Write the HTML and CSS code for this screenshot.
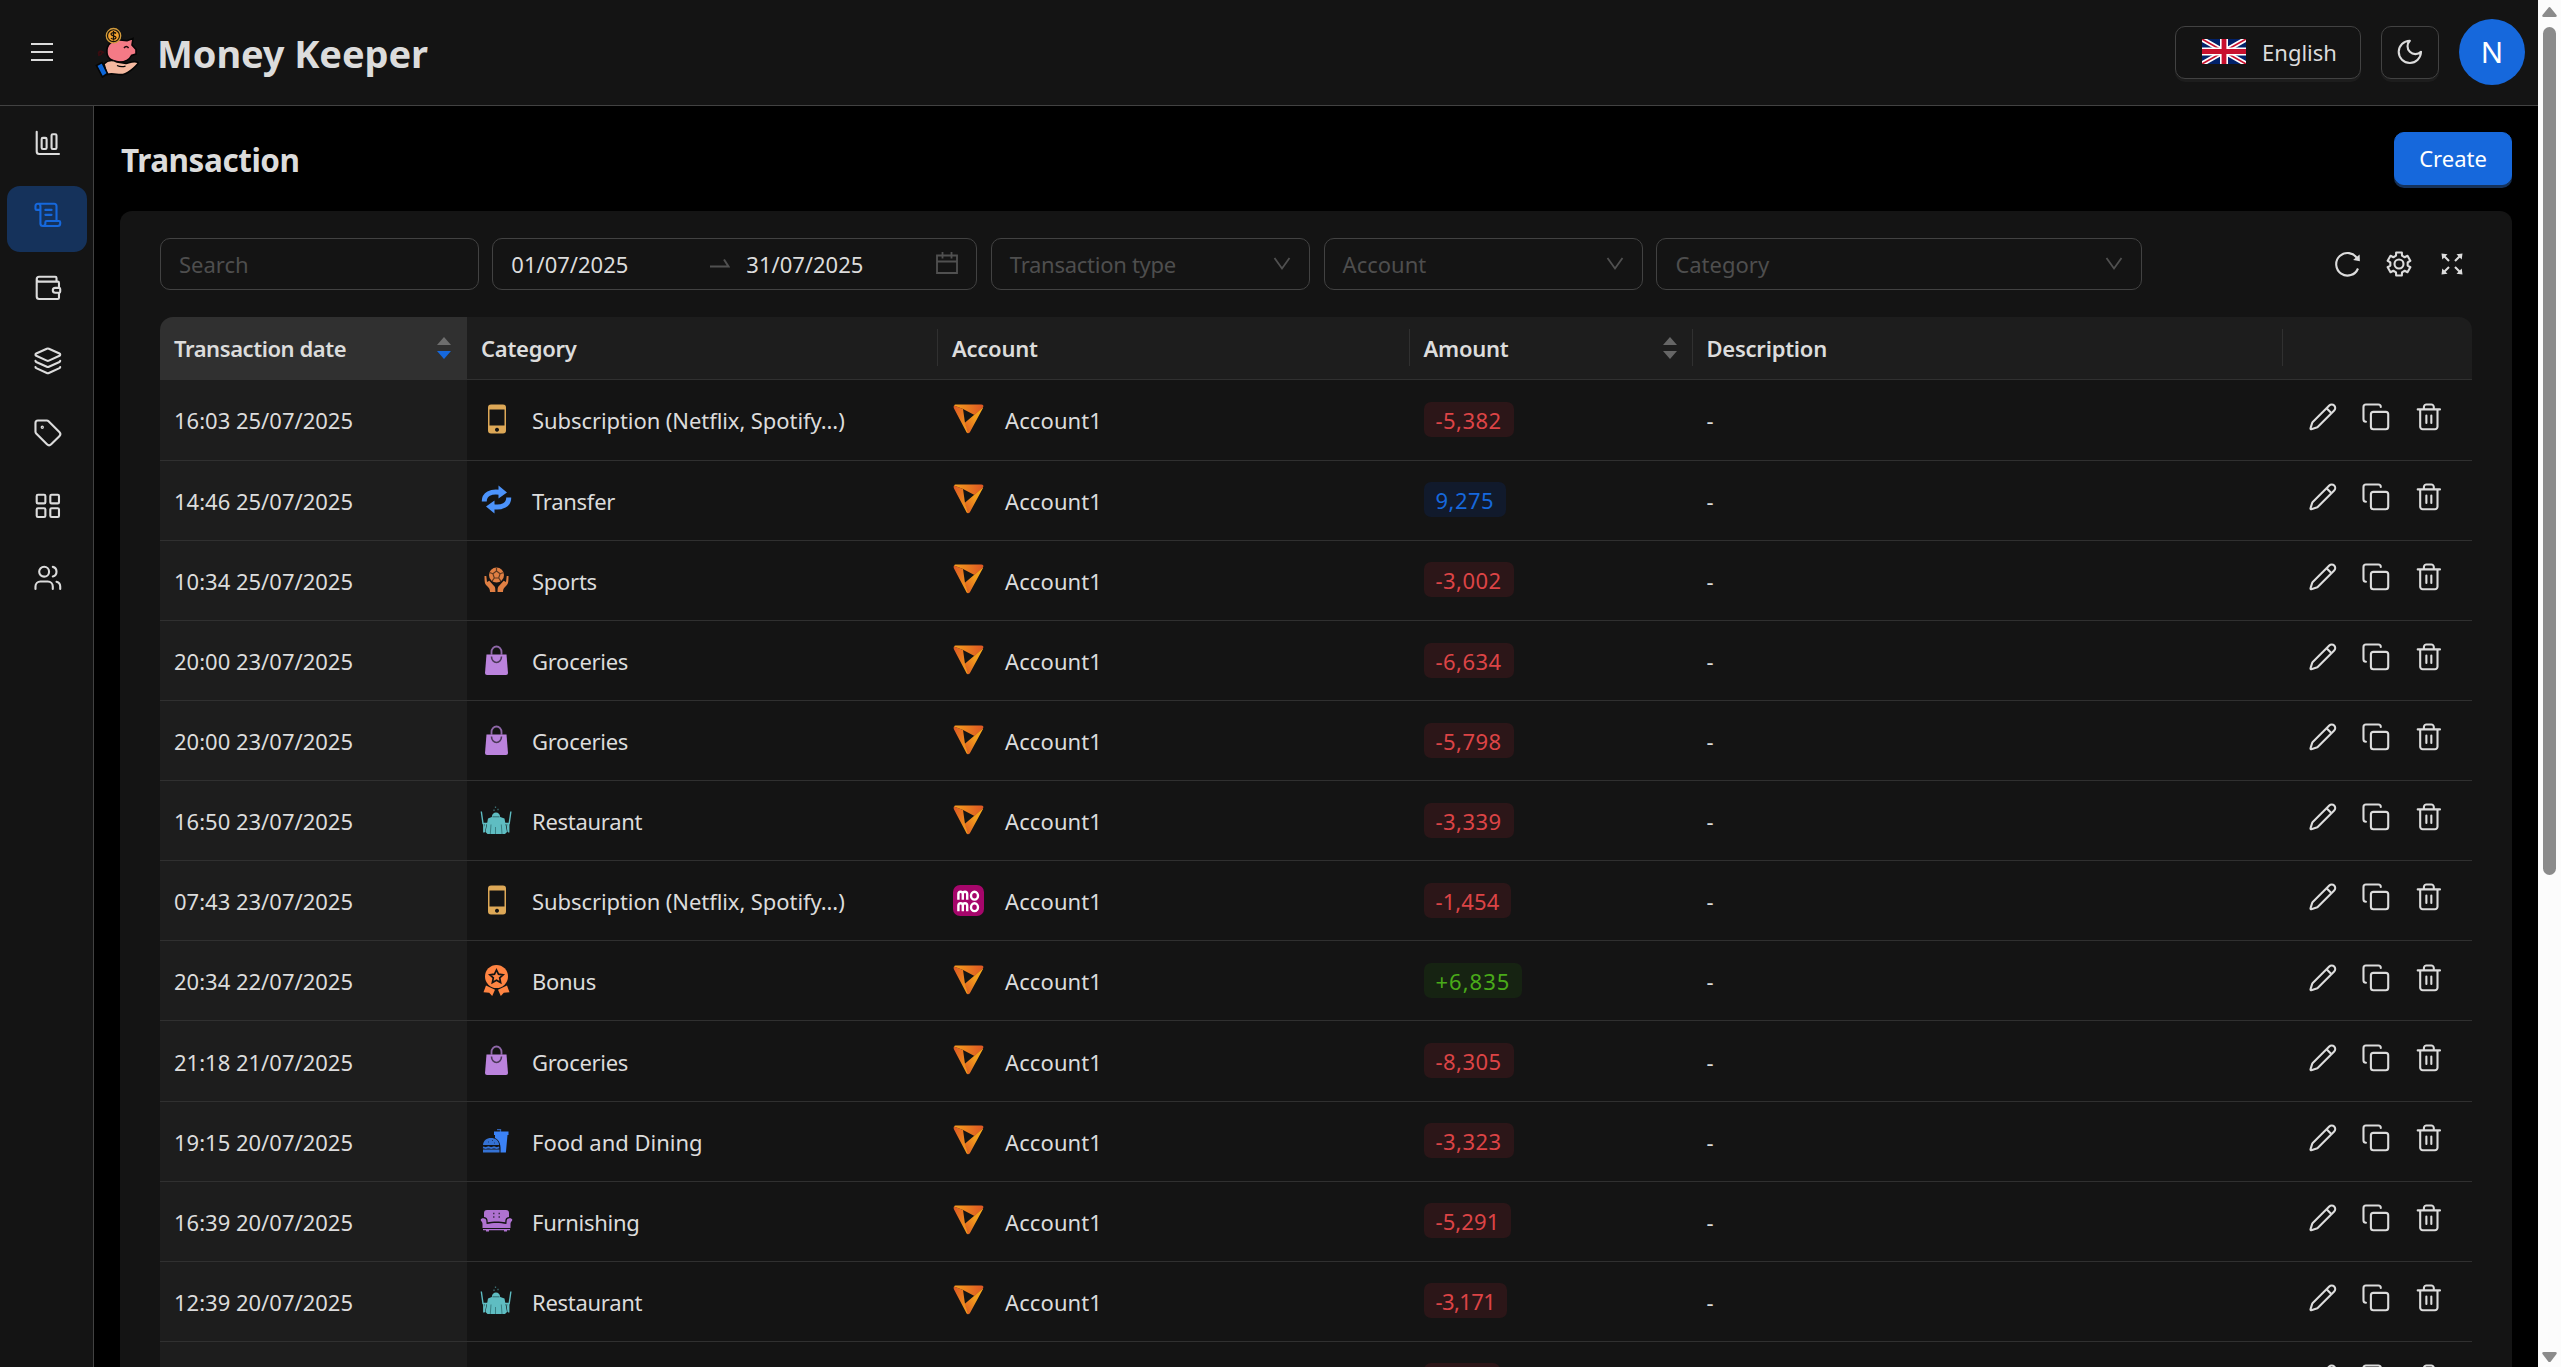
FILE: index.html
```html
<!DOCTYPE html>
<html lang="en">
<head>
<meta charset="utf-8">
<title>Money Keeper</title>
<link rel="stylesheet" href="styles.css">
</head>
<body>
<svg class="defs" aria-hidden="true">
  <defs>
    <linearGradient id="g-top" x1="0" x2="1" y1="0" y2="0"><stop offset="0" stop-color="#f7a01c"/><stop offset="1" stop-color="#dd5524"/></linearGradient>
    <linearGradient id="g-left" x1="0" x2="1" y1="0" y2="1"><stop offset="0" stop-color="#dd5524"/><stop offset="1" stop-color="#f5a31b"/></linearGradient>
    <linearGradient id="g-right" x1="1" x2="0" y1="0" y2="1"><stop offset="0" stop-color="#f9ab1b"/><stop offset="0.45" stop-color="#f19a1c"/><stop offset="1" stop-color="#dd5524"/></linearGradient>
  </defs>
  <symbol id="pencil" viewBox="0 0 24 24"><path d="M21.174 6.812a1 1 0 0 0-3.986-3.987L3.842 16.174a2 2 0 0 0-.5.83l-1.321 4.352a.5.5 0 0 0 .623.622l4.353-1.32a2 2 0 0 0 .83-.497zM15 5l4 4"/></symbol>
  <symbol id="copy" viewBox="0 0 24 24"><rect x="8" y="8" width="14" height="14" rx="2"/><path d="M4 16c-1.1 0-2-.9-2-2V4c0-1.1.9-2 2-2h10c1.1 0 2 .9 2 2"/></symbol>
  <symbol id="trash" viewBox="0 0 24 24"><path d="M3 6h18M19 6v14c0 1-1 2-2 2H7c-1 0-2-1-2-2V6M8 6V4c0-1 1-2 2-2h4c1 0 2 1 2 2v2M10 11v6M14 11v6"/></symbol>
  <symbol id="sorter" viewBox="0 0 14 22"><path d="M7 0l7 8H0z"/><path fill="currentColor" d="M0 14h14l-7 8z"/></symbol>
  <symbol id="chevron" viewBox="0 0 20 20"><path d="M2.500 4L10 14.500 17.500 4"/></symbol>

  <symbol id="phone" viewBox="0 0 33 33"><path fill="#dda857" fill-rule="evenodd" d="M11 1.500h12a3 3 0 0 1 3 3v23a3 3 0 0 1-3 3H11a3 3 0 0 1-3-3v-23a3 3 0 0 1 3-3zM9.500 6.500v16h15v-16zM17 24.800a2 2 0 1 0 .01 0z"/></symbol>
  <symbol id="transfer" viewBox="0 0 33 33"><path d="M4.300 18.500C4 11.500 11 7.600 20 9.300M28.700 14.500C29 21.500 22 25.400 13 23.700" fill="none" stroke="#4c93fb" stroke-width="5"/><path fill="#4c93fb" d="M18.500 2.500L27 9.500 18.500 15.500zM14.500 30.500L6 23.500l8.500-6z"/></symbol>
  <symbol id="sports" viewBox="0 0 33 33"><circle cx="16.500" cy="12" r="7.500" fill="#e07f43"/><path d="M16.500 8l3.600 2.700-1.400 4.300h-4.400l-1.400-4.300zM16.500 4.500V8M20.100 10.700l3.400-1.200M18.700 15l2.200 3.200M14.300 15l-2.200 3.200M12.900 10.700L9.500 9.500" fill="none" stroke="#5f3920" stroke-width="1.200"/><path fill="#e07f43" d="M4.500 13h1.800l.7 6 2.300-1.200 5.200 5.600c.7.900.9 1.800.9 5.600H10c0-3-1-4-3.200-6.200C4.800 21 4.500 19 4.500 13zM28.500 13h-1.800l-.7 6-2.300-1.200-5.200 5.600c-.7.900-.9 1.800-.9 5.600H23c0-3 1-4 3.200-6.200C28.200 21 28.500 19 28.500 13z"/></symbol>
  <symbol id="bag" viewBox="0 0 33 33"><path fill="#bb83dd" d="M6.500 10.500h20L28 29a2 2 0 0 1-2 2H7a2 2 0 0 1-2-2z"/><path d="M11.500 11V8a5 5.500 0 0 1 10 0v3" fill="none" stroke="#8f68a8" stroke-width="1.800"/><path d="M11.500 12.500a5 6 0 0 0 10 0" fill="none" stroke="#4d3a5b" stroke-width="1.600"/></symbol>
  <symbol id="restaurant" viewBox="0 0 33 33"><path fill="#5fbdc2" d="M11.800 13c.2-2.800 1.900-4.500 4.200-4.500s4 1.700 4.200 4.500l4.300 1.500L27 28l-2 2H7.500L5.500 28 8 14.500z"/><path d="M1.300 7.500l1.700 12h5M3.800 20v8.500M5.800 20l-1.500 8M30.900 7.500l-1.700 12h-5M28.700 20v8.500M27 20l1.200 8" fill="none" stroke="#5fbdc2" stroke-width="1.400"/><path d="M11 20.500l-.7 9.500M21.300 20.500l.7 9.500M15.500 23v7" stroke="#3a7f83" stroke-width="1"/><path d="M12.500 12.800h7" stroke="#2f6d70" stroke-width="1"/><path d="M15.500 2.500V4M18 4.800v1.500M14 5.500V7" stroke="#3b6f73" stroke-width="1.300"/></symbol>
  <symbol id="bonus" viewBox="0 0 33 33"><circle cx="16.500" cy="12.500" r="11.500" fill="#ff8442"/><path d="M16.500 6l2 4.200 4.600.6-3.400 3.100.9 4.600-4.100-2.300-4.100 2.300.9-4.600-3.400-3.100 4.600-.6z" fill="none" stroke="#141414" stroke-width="1.700"/><path fill="#ff8442" d="M6 21.500l9 4.300L12.200 32l-3-3.300-5.700-.4zM27 21.500l-9 4.300 2.800 6.200 3-3.300 5.700-.4z"/></symbol>
  <symbol id="food" viewBox="0 0 33 33"><path d="M20.500 8V5.600H17" fill="none" stroke="#2f5fae" stroke-width="1.300"/><path fill="#3b82f6" d="M14 7.500h14.500v3.500H14zM15 11h12.500l-1.600 17.500h-5.400c.5-7-.5-12-5.500-14.500z"/><path fill="#3572d4" d="M3 21c.5-4.800 3.600-7 8-7s7.800 2.200 8.200 7zM3 25.500h16.500v3H3z"/><path d="M3 23.300l2.700.8 2.800-.8 2.700.8 2.800-.8 2.700.8 2.500-.8" fill="none" stroke="#3572d4" stroke-width="1.800"/><path d="M8 18h1M12 16.500h1M14 19h1" stroke="#1d3c70" stroke-width="1.200"/></symbol>
  <symbol id="sofa" viewBox="0 0 33 33"><path fill="#af72d0" d="M7 6h19c2 0 3 1.200 3 3v4c-3 .3-3.700 2-3.700 5.200-5-1-12.600-1-17.600 0C7.700 15 7 13.300 4 13V9c0-1.800 1-3 3-3z"/><path fill="#af72d0" d="M.7 15.800c0-2 5.300-2.600 5.600.8l.3 3.400c6-1.500 13.800-1.500 19.800 0l.3-3.400c.3-3.400 5.600-2.800 5.600-.8 0 1.500-1.800 2-1.800 4V24H2.500v-4.200c0-2-1.800-2.500-1.800-4zM3 24.900h27v1.400H3zM6 26h3v1.500H6zM24 26h3v1.500h-3z"/><path d="M13 9.500h1.500M18.500 9.500H20M13 13h1.500M18.500 13H20" stroke="#3f2c4b" stroke-width="1.500"/></symbol>
  <symbol id="play" viewBox="0 0 33 33"><path fill="url(#g-right)" d="M31 5L18 29c-.6 1.300-2.200 1.600-3 .5L12.500 20l9.500-8 9-8z"/><path fill="url(#g-left)" d="M2 2.500L11 6l2 14 2.800 10.300c-.6-.1-1-.5-1.300-1.100L2 5.500C1.500 4.300 1.500 3.300 2 2.500z"/><path fill="url(#g-top)" d="M3.500 1.500h25.800c1.800 0 2.500 1.200 1.900 2.500L22.500 12 11 6 2 2.500c.4-.6.900-1 1.500-1z"/></symbol>
  <symbol id="momo" viewBox="0 0 33 33"><rect x="1" y="1" width="31" height="31" rx="7" fill="#a6066b"/><g fill="none" stroke="#fff" stroke-width="2.400"><path d="M6.400 15.800V10q0-2.300 2.200-2.300T10.800 10v5.800M10.800 10q0-2.300 2.200-2.300T15.200 10v5.800"/><ellipse cx="22.500" cy="11.700" rx="3.500" ry="3.900"/><path d="M6.400 27.300v-5.800q0-2.300 2.200-2.300t2.200 2.300v5.800M10.800 21.500q0-2.300 2.200-2.300t2.200 2.300v5.800"/><ellipse cx="22.500" cy="23.200" rx="3.500" ry="3.900"/></g></symbol>
</svg>

<div class="viewport">
<div class="app">
  <header class="header">
    <svg class="burger" viewBox="0 0 22 18"><path d="M0 1h22M0 9h22M0 17h22"/></svg>
    <svg class="logo" viewBox="0 0 52 52">
      <path d="M12 27c-2-3-6-2-5.500.5S10 29 10 26.500 6 25 7 30" fill="none" stroke="#3a0c10" stroke-width="1.500"/>
      <path d="M15 27c-1-9 6-13.500 13-13l7 .8 6-2.300-1 6.500 4 4.500v4.500l-4.500 1.500c-2 4-6 6.500-12 6.500S15.500 33 15 27z" fill="#f47a86" stroke="#050505" stroke-width="1.600"/>
      <path d="M32 22q2.300-3 4.600 0" fill="none" stroke="#1a0a0c" stroke-width="1.500"/>
      <path d="M12 38c4-4.500 8-4.500 13-2l9 1.500c3-.5 8-3.500 12-1 1.500 1-9 10.500-15 12-5 1-10-2-16 0z" fill="#f5b9a0" stroke="#050505" stroke-width="1.600"/>
      <path d="M25 39.500c3 1.500 5.500 1.600 8.500.6" fill="none" stroke="#050505" stroke-width="1.300"/>
      <path d="M4.500 39.500l5.500-3 5.500 11-5 3.500z" fill="#0d66d8" stroke="#050505" stroke-width="1.600"/>
      <circle cx="21.500" cy="9.700" r="7.200" fill="#17120a" stroke="#d09a3c" stroke-width="1.300"/><circle cx="21.500" cy="9.700" r="5.400" fill="#f2a12e"/>
      <path d="M24 7.500c-1-1.400-5-1.400-5 .6 0 2.400 5 1.200 5 3.500 0 2-4 2-5 .4M21.500 5v9.500" fill="none" stroke="#17120a" stroke-width="1.300"/>
    </svg>
    <h1 class="brand">Money Keeper</h1>
    <div class="header-actions">
      <button class="btn lang">
        <svg class="flag" viewBox="0 0 44 25"><rect width="44" height="25" fill="#012169"/><path d="M0 0l44 25M44 0L0 25" stroke="#fff" stroke-width="5"/><path d="M0 0l22 12.500L44 25M44 0L22 12.500 0 25" stroke="#c8102e" stroke-width="1.600"/><path d="M22 0v25M0 12.500h44" stroke="#fff" stroke-width="8"/><path d="M22 0v25M0 12.500h44" stroke="#c8102e" stroke-width="4.800"/></svg>
        <span>English</span>
      </button>
      <button class="btn theme"><svg class="icon" viewBox="0 0 24 24"><path d="M12 3a6 6 0 0 0 9 9 9 9 0 1 1-9-9Z"/></svg></button>
      <div class="avatar">N</div>
    </div>
  </header>

  <div class="body">
    <nav class="sidebar">
      <a class="item"><svg class="icon" viewBox="0 0 24 24"><path d="M3 3v16a2 2 0 0 0 2 2h16"/><rect x="15" y="5" width="4" height="12" rx="1"/><rect x="7" y="8" width="4" height="9" rx="1"/></svg></a>
      <a class="item active"><svg class="icon" viewBox="0 0 24 24"><path d="M15 12h-5M15 8h-5M19 17V5a2 2 0 0 0-2-2H4M8 21h12a2 2 0 0 0 2-2v-1a1 1 0 0 0-1-1H11a1 1 0 0 0-1 1v1a2 2 0 1 1-4 0V5a2 2 0 1 0-4 0v2a1 1 0 0 0 1 1h3"/></svg></a>
      <a class="item"><svg class="icon" viewBox="0 0 24 24"><path d="M19 7V4a1 1 0 0 0-1-1H5a2 2 0 0 0 0 4h15a1 1 0 0 1 1 1v4h-3a2 2 0 0 0 0 4h3a1 1 0 0 0 1-1v-2a1 1 0 0 0-1-1M3 5v14a2 2 0 0 0 2 2h15a1 1 0 0 0 1-1v-4"/></svg></a>
      <a class="item"><svg class="icon" viewBox="0 0 24 24"><path d="M12.830 2.180a2 2 0 0 0-1.660 0L2.600 6.080a1 1 0 0 0 0 1.830l8.580 3.910a2 2 0 0 0 1.660 0l8.580-3.900a1 1 0 0 0 0-1.830zM2 12a1 1 0 0 0 .58.910l8.600 3.910a2 2 0 0 0 1.650 0l8.580-3.900A1 1 0 0 0 22 12M2 17a1 1 0 0 0 .58.910l8.600 3.910a2 2 0 0 0 1.650 0l8.580-3.900A1 1 0 0 0 22 17"/></svg></a>
      <a class="item"><svg class="icon" viewBox="0 0 24 24"><path d="M12.586 2.586A2 2 0 0 0 11.172 2H4a2 2 0 0 0-2 2v7.172a2 2 0 0 0 .586 1.414l8.704 8.704a2.426 2.426 0 0 0 3.420 0l6.580-6.580a2.426 2.426 0 0 0 0-3.420z"/><circle cx="7.500" cy="7.500" r=".5"/></svg></a>
      <a class="item"><svg class="icon" viewBox="0 0 24 24"><rect x="3" y="3" width="7" height="7" rx="1"/><rect x="14" y="3" width="7" height="7" rx="1"/><rect x="14" y="14" width="7" height="7" rx="1"/><rect x="3" y="14" width="7" height="7" rx="1"/></svg></a>
      <a class="item"><svg class="icon" viewBox="0 0 24 24"><path d="M16 21v-2a4 4 0 0 0-4-4H6a4 4 0 0 0-4 4v2M22 21v-2a4 4 0 0 0-3-3.870M16 3.130a4 4 0 0 1 0 7.750"/><circle cx="9" cy="7" r="4"/></svg></a>
    </nav>

    <main class="main">
      <div class="page-head">
        <h2 class="page-title">Transaction</h2>
        <button class="btn primary">Create</button>
      </div>

      <section class="card">
        <div class="toolbar">
          <div class="filters">
            <div class="field"><span class="ph">Search</span></div>
            <div class="field range">
              <span class="date">01/07/2025</span>
              <svg class="arrow" viewBox="0 0 20 20"><path d="M0 15.500h18.500L14 8.500"/></svg>
              <span class="date end">31/07/2025</span>
              <svg class="calendar" viewBox="0 0 22 22"><path d="M1 3.500h20V21H1zM1 9.500h20M6.500 0v6.500M15.500 0v6.500"/></svg>
            </div>
            <div class="field"><span class="ph tight">Transaction type</span><svg class="chev"><use href="#chevron"/></svg></div>
            <div class="field"><span class="ph">Account</span><svg class="chev"><use href="#chevron"/></svg></div>
            <div class="field"><span class="ph">Category</span><svg class="chev"><use href="#chevron"/></svg></div>
          </div>
          <div class="tools">
            <svg viewBox="0 0 30 30"><path d="M26 19.500A11.300 11.300 0 1 1 25.200 9.500"/><path class="solid" d="M27.600 5.500l.3 6.800-6.800-1.300z"/></svg>
            <svg viewBox="0 0 30 30"><path d="M12 6.700L12.150 3.550H17.850L18 6.700 20.660 8.260 23.490 6.800 26.340 11.750 23.670 13.470V16.530L26.340 18.250 23.490 23.200 20.660 21.740 18 23.300 17.850 26.450H12.150L12 23.300 9.340 21.740 6.510 23.200 3.660 18.250 6.330 16.530V13.470L3.660 11.750 6.510 6.800 9.340 8.260z"/><circle cx="15" cy="15" r="4.500"/></svg>
            <svg viewBox="0 0 30 30"><path d="M7 7l5 5M23 7l-5 5M7 23l5-5M23 23l-5-5"/><path class="solid" d="M4.500 4.500l6 .8-5.200 5.200zM25.500 4.500l-6 .8 5.200 5.200zM4.500 25.500l6-.8-5.200-5.200zM25.500 25.500l-6-.8 5.200-5.200z"/></svg>
          </div>
        </div>

        <div class="table">
          <div class="row head">
            <div class="cell sorted"><span class="wide-head">Transaction date</span><svg class="sorter desc"><use href="#sorter"/></svg></div>
            <div class="cell sep">Category</div>
            <div class="cell sep">Account</div>
            <div class="cell sep"><span>Amount</span><svg class="sorter"><use href="#sorter"/></svg></div>
            <div class="cell sep">Description</div>
            <div class="cell"></div>
          </div>
          <div class="row first"><div class="cell date-cell">16:03 25/07/2025</div><div class="cell"><svg class="pic"><use href="#phone"/></svg><span class="dense">Subscription (Netflix, Spotify...)</span></div><div class="cell acc"><svg class="pic"><use href="#play"/></svg>Account1</div><div class="cell"><span class="tag out">-5,382</span></div><div class="cell">-</div><div class="cell ops"><svg><use href="#pencil"/></svg><svg><use href="#copy"/></svg><svg><use href="#trash"/></svg></div></div>
          <div class="row"><div class="cell date-cell">14:46 25/07/2025</div><div class="cell"><svg class="pic"><use href="#transfer"/></svg><span class="snug">Transfer</span></div><div class="cell acc"><svg class="pic"><use href="#play"/></svg>Account1</div><div class="cell"><span class="tag move">9,275</span></div><div class="cell">-</div><div class="cell ops"><svg><use href="#pencil"/></svg><svg><use href="#copy"/></svg><svg><use href="#trash"/></svg></div></div>
          <div class="row"><div class="cell date-cell">10:34 25/07/2025</div><div class="cell"><svg class="pic"><use href="#sports"/></svg><span class="snug">Sports</span></div><div class="cell acc"><svg class="pic"><use href="#play"/></svg>Account1</div><div class="cell"><span class="tag out">-3,002</span></div><div class="cell">-</div><div class="cell ops"><svg><use href="#pencil"/></svg><svg><use href="#copy"/></svg><svg><use href="#trash"/></svg></div></div>
          <div class="row"><div class="cell date-cell">20:00 23/07/2025</div><div class="cell"><svg class="pic"><use href="#bag"/></svg><span class="snug">Groceries</span></div><div class="cell acc"><svg class="pic"><use href="#play"/></svg>Account1</div><div class="cell"><span class="tag out">-6,634</span></div><div class="cell">-</div><div class="cell ops"><svg><use href="#pencil"/></svg><svg><use href="#copy"/></svg><svg><use href="#trash"/></svg></div></div>
          <div class="row"><div class="cell date-cell">20:00 23/07/2025</div><div class="cell"><svg class="pic"><use href="#bag"/></svg><span class="snug">Groceries</span></div><div class="cell acc"><svg class="pic"><use href="#play"/></svg>Account1</div><div class="cell"><span class="tag out">-5,798</span></div><div class="cell">-</div><div class="cell ops"><svg><use href="#pencil"/></svg><svg><use href="#copy"/></svg><svg><use href="#trash"/></svg></div></div>
          <div class="row"><div class="cell date-cell">16:50 23/07/2025</div><div class="cell"><svg class="pic"><use href="#restaurant"/></svg><span class="snug">Restaurant</span></div><div class="cell acc"><svg class="pic"><use href="#play"/></svg>Account1</div><div class="cell"><span class="tag out">-3,339</span></div><div class="cell">-</div><div class="cell ops"><svg><use href="#pencil"/></svg><svg><use href="#copy"/></svg><svg><use href="#trash"/></svg></div></div>
          <div class="row"><div class="cell date-cell">07:43 23/07/2025</div><div class="cell"><svg class="pic"><use href="#phone"/></svg><span class="dense">Subscription (Netflix, Spotify...)</span></div><div class="cell acc"><svg class="pic"><use href="#momo"/></svg>Account1</div><div class="cell"><span class="tag out narrow">-1,454</span></div><div class="cell">-</div><div class="cell ops"><svg><use href="#pencil"/></svg><svg><use href="#copy"/></svg><svg><use href="#trash"/></svg></div></div>
          <div class="row"><div class="cell date-cell">20:34 22/07/2025</div><div class="cell"><svg class="pic"><use href="#bonus"/></svg><span class="snug">Bonus</span></div><div class="cell acc"><svg class="pic"><use href="#play"/></svg>Account1</div><div class="cell"><span class="tag in">+6,835</span></div><div class="cell">-</div><div class="cell ops"><svg><use href="#pencil"/></svg><svg><use href="#copy"/></svg><svg><use href="#trash"/></svg></div></div>
          <div class="row"><div class="cell date-cell">21:18 21/07/2025</div><div class="cell"><svg class="pic"><use href="#bag"/></svg><span class="snug">Groceries</span></div><div class="cell acc"><svg class="pic"><use href="#play"/></svg>Account1</div><div class="cell"><span class="tag out">-8,305</span></div><div class="cell">-</div><div class="cell ops"><svg><use href="#pencil"/></svg><svg><use href="#copy"/></svg><svg><use href="#trash"/></svg></div></div>
          <div class="row"><div class="cell date-cell">19:15 20/07/2025</div><div class="cell"><svg class="pic"><use href="#food"/></svg>Food and Dining</div><div class="cell acc"><svg class="pic"><use href="#play"/></svg>Account1</div><div class="cell"><span class="tag out">-3,323</span></div><div class="cell">-</div><div class="cell ops"><svg><use href="#pencil"/></svg><svg><use href="#copy"/></svg><svg><use href="#trash"/></svg></div></div>
          <div class="row"><div class="cell date-cell">16:39 20/07/2025</div><div class="cell"><svg class="pic"><use href="#sofa"/></svg><span class="snug">Furnishing</span></div><div class="cell acc"><svg class="pic"><use href="#play"/></svg>Account1</div><div class="cell"><span class="tag out narrow">-5,291</span></div><div class="cell">-</div><div class="cell ops"><svg><use href="#pencil"/></svg><svg><use href="#copy"/></svg><svg><use href="#trash"/></svg></div></div>
          <div class="row"><div class="cell date-cell">12:39 20/07/2025</div><div class="cell"><svg class="pic"><use href="#restaurant"/></svg><span class="snug">Restaurant</span></div><div class="cell acc"><svg class="pic"><use href="#play"/></svg>Account1</div><div class="cell"><span class="tag out slim">-3,171</span></div><div class="cell">-</div><div class="cell ops"><svg><use href="#pencil"/></svg><svg><use href="#copy"/></svg><svg><use href="#trash"/></svg></div></div>
          <div class="row"><div class="cell date-cell"></div><div class="cell"></div><div class="cell acc"></div><div class="cell"><span class="tag out blank"></span></div><div class="cell"></div><div class="cell ops"><svg><use href="#pencil"/></svg><svg><use href="#copy"/></svg><svg><use href="#trash"/></svg></div></div>
        </div>
      </section>
    </main>
  </div>
</div>
<div class="scrollbar">
  <svg viewBox="0 0 15 10"><path d="M6.200 1Q7.500-.8 8.800 1L14.500 8q.9 2-1.300 2H1.800Q-.4 10 .5 8z"/></svg>
  <div class="thumb"></div>
  <svg viewBox="0 0 15 10"><path d="M6.200 9.500Q7.500 11 8.800 9.500L14.500 2q.9-2-1.300-2H1.800Q-.4 0 .5 2z"/></svg>
</div>
</div>
</body>
</html>
```
FILE: styles.css
```css
* { box-sizing: border-box; }

body {
  margin: 0;
  height: 1367px;
  overflow: hidden;
  background: #000;
  color: #dcdcdc;
  font-family: "Noto Sans", "Open Sans", sans-serif;
  font-size: 22px;
  line-height: 36px;
}

h1, h2 { margin: 0; }
svg { display: block; flex: none; fill: none; }
.defs { position: absolute; width: 0; height: 0; }

.viewport { display: flex; height: 1367px; overflow: hidden; }
.app { flex: 1; min-width: 0; display: flex; flex-direction: column; }

/* Header */
.header {
  display: flex;
  align-items: center;
  flex: none;
  height: 106px;
  padding: 0 13px 1px 31px;
  background: #141414;
  border-bottom: 1px solid #424242;
}
.burger { width: 22px; height: 18px; stroke: #dcdcdc; stroke-width: 2; overflow: visible; }
.logo { width: 52px; height: 52px; margin-left: 39px; }
.brand { margin: 2px 0 0 13px; font-size: 38px; font-weight: 700; letter-spacing: -0.1px; color: #dcdcdc; }
.header-actions { display: flex; align-items: center; gap: 20px; margin-left: auto; }

.btn {
  display: flex;
  align-items: center;
  justify-content: center;
  height: 53px;
  padding: 0 0 1px;
  border: 1px solid #424242;
  border-radius: 10px;
  background: #141414;
  box-shadow: 0 3px 0 #1d1d1d;
  color: #dcdcdc;
  font: inherit;
}
.lang { width: 186px; gap: 16px; padding-left: 3px; }
.flag { width: 44px; height: 25px; }
.theme { width: 58px; }
.primary { width: 118px; background: #1668dc; border-color: #1668dc; color: #fff; box-shadow: 0 3px 0 #15325b; }
.avatar {
  width: 66px;
  height: 66px;
  border-radius: 50%;
  background: #1668dc;
  color: #fff;
  font-size: 29.500px;
  line-height: 66px;
  text-align: center;
}

.icon, .ops svg {
  width: 29.700px;
  height: 29.700px;
  stroke: #dcdcdc;
  stroke-width: 1.700;
  stroke-linecap: round;
  stroke-linejoin: round;
}

/* Sidebar */
.body { display: flex; flex: 1; min-height: 0; }
.sidebar {
  flex: none;
  width: 94px;
  padding: 7.400px 6px 0 7px;
  border-right: 1px solid #424242;
  background: #141414;
}
.item { display: flex; justify-content: center; height: 66px; width: 80px; margin-bottom: 6.600px; padding: 14.500px 0 0 1px; border-radius: 13px; }
.item.active { background: #15325b; }
.item.active .icon { stroke: #1668dc; }

/* Page */
.main { flex: 1; min-width: 0; padding: 26px 26px 0; }
.page-head { display: flex; align-items: center; justify-content: space-between; height: 53px; margin-bottom: 26px; }
.page-title { margin: 2px 0 0 1px; font-size: 31.500px; font-weight: 700; letter-spacing: -0.450px; }
.card { height: 1300px; padding: 27px 40px 0; border-radius: 12px; background: #141414; }

.toolbar { display: flex; align-items: center; justify-content: space-between; height: 52px; margin-bottom: 27px; }
.filters { display: grid; grid-template-columns: 319px 485.200px 319.500px 319.500px 485.200px; gap: 13.300px; }
.field {
  display: flex;
  align-items: center;
  justify-content: space-between;
  height: 52px;
  padding: 0 17px 0 18px;
  border: 1px solid #424242;
  border-radius: 10px;
}
.ph { color: #4e4e4e; }
.ph.tight { letter-spacing: -0.270px; }
.chev { width: 20px; height: 20px; stroke: #505050; stroke-width: 1.800; }
.range { justify-content: flex-start; padding-right: 18px; }
.date { width: 199px; }
.date.end { margin-left: 16px; width: auto; }
.arrow { width: 20px; height: 20px; stroke: #505050; stroke-width: 2; margin-bottom: 6px; }
.calendar { width: 22px; height: 22px; margin: 0 0 2px auto; stroke: #505050; stroke-width: 1.800; }

.tools { display: flex; gap: 22.500px; padding: 0 5.500px 1px 0; }
.tools svg { width: 30px; height: 30px; stroke: #dcdcdc; stroke-width: 2.100; stroke-linejoin: round; }
.tools .solid { fill: #dcdcdc; stroke: none; }

/* Table */
.row {
  display: grid;
  grid-template-columns: 307px 471px 471.500px 283px 590px 189.500px;
  height: 80.100px;
}
.row.first { height: 80.800px; }
.cell {
  display: flex;
  align-items: center;
  padding: 1px 13px 0 14px;
  border-bottom: 1px solid #303030;
  white-space: nowrap;
}
.date-cell { background: #1d1d1d; }
.pic { width: 33px; height: 33px; margin: 0 19px 2px -1px; }
.acc { letter-spacing: 0.100px; }
.acc .pic { margin-left: 0; margin-right: 20px; }
.snug { letter-spacing: -0.280px; }
.dense { letter-spacing: -0.080px; }

.head { height: 63px; font-weight: 600; }
.head .cell { position: relative; background: #1d1d1d; justify-content: space-between; letter-spacing: -0.250px; padding-top: 0; }
.head .cell:first-child { border-top-left-radius: 13px; }
.head .cell:last-child { border-top-right-radius: 13px; }
.head .sorted { background: #303030; }
.wide-head { letter-spacing: -0.430px; }
.head .sep::after {
  content: "";
  position: absolute;
  top: 12px;
  right: 0;
  width: 1px;
  height: 37px;
  background: #303030;
}
.sorter { width: 14px; height: 22px; margin-right: 3px; fill: #666; color: #666; }
.sorter.desc { fill: #6e6e6e; color: #1668dc; }

.tag {
  height: 35px;
  margin-bottom: 2px;
  padding: 0 12px;
  border-radius: 7px;
  line-height: 36px;
  letter-spacing: 0.450px;
}
.out { background: #2c1618; color: #dc4446; }
.move { background: #111a2c; color: #1668dc; }
.in { background: #162312; color: #49aa19; letter-spacing: 1px; }
.narrow { letter-spacing: 0.100px; }
.slim { letter-spacing: -0.600px; }
.blank { width: 76px; }

.ops { padding: 0 28px 7px 0; justify-content: flex-end; gap: 23.700px; }

/* Window scrollbar */
.scrollbar {
  flex: none;
  display: flex;
  flex-direction: column;
  align-items: center;
  width: 23px;
  padding: 7px 0 5px;
  background: #fcfcfc;
}
.scrollbar svg { width: 15px; height: 10px; fill: #8b8b8b; }
.thumb { width: 13px; height: 848px; margin: 10px 0 auto; border-radius: 7px; background: #8b8b8b; }
```
